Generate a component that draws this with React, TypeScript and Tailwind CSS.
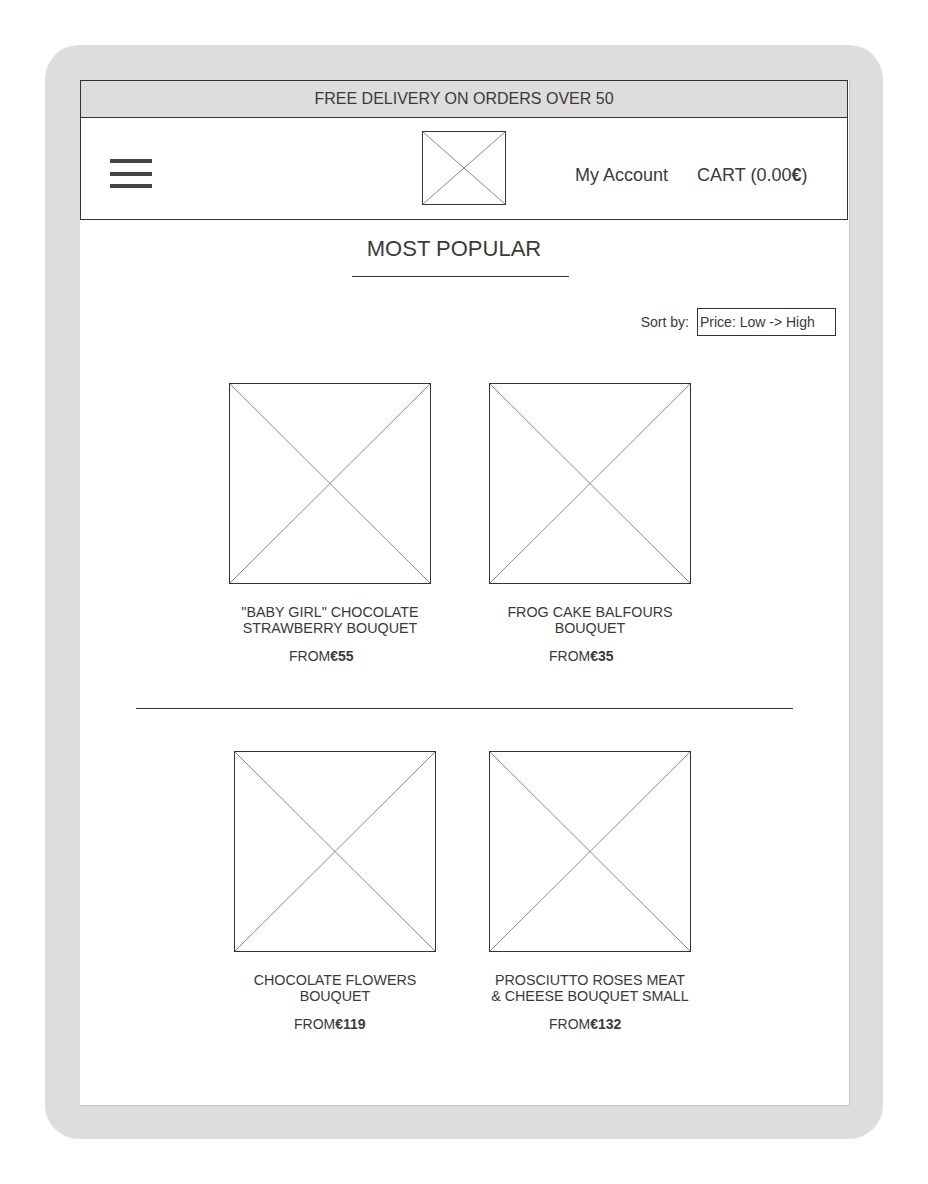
import React from 'react'

interface Product {
  lines: string[]
  price: string
}

const rowOne: Product[] = [
  { lines: ['"BABY GIRL" CHOCOLATE', 'STRAWBERRY BOUQUET'], price: '€55' },
  { lines: ['FROG CAKE BALFOURS', 'BOUQUET'], price: '€35' },
]

const rowTwo: Product[] = [
  { lines: ['CHOCOLATE FLOWERS', 'BOUQUET'], price: '€119' },
  { lines: ['PROSCIUTTO ROSES MEAT', '& CHEESE BOUQUET SMALL'], price: '€132' },
]

// wireframe image placeholder: box with a cross
function Placeholder({ className }: { className: string }) {
  return (
    <div className={`relative border border-[#333333] bg-white ${className}`}>
      <svg className="absolute inset-0 h-full w-full" viewBox="0 0 100 100" preserveAspectRatio="none">
        <line x1="0" y1="0" x2="100" y2="100" stroke="#8a8a8a" strokeWidth="1" vectorEffect="non-scaling-stroke" />
        <line x1="100" y1="0" x2="0" y2="100" stroke="#8a8a8a" strokeWidth="1" vectorEffect="non-scaling-stroke" />
      </svg>
    </div>
  )
}

function ProductCard({ product }: { product: Product }) {
  return (
    <div className="flex w-[202px] flex-col">
      <Placeholder className="h-[201px] w-[202px]" />
      <p className="mt-[20px] whitespace-nowrap text-center text-[14.3px] leading-[16px] text-[#3a3a3a]">
        {product.lines[0]}
        <br />
        {product.lines[1]}
      </p>
      {/* price sits in a fixed text box, so it starts at the same offset */}
      <p className="mt-[12px] pl-[60px] text-[14px] leading-[16px] text-[#3a3a3a]">
        FROM<span className="font-bold">{product.price}</span>
      </p>
    </div>
  )
}

export default function App() {
  return (
    <div className="min-h-[1184px] w-[928px] bg-white pl-[45px] pt-[45px] font-['Liberation_Sans',Arial,sans-serif]">
      <div className="h-[1094px] w-[838px] rounded-[34px] bg-[#dddddd] pl-[35px] pt-[35px]">
        <div className="h-[1025px] w-[769px] bg-white shadow-[1px_1px_0_#c4c4c4]">
          {/* top promo bar */}
          <div className="flex h-[38px] w-[768px] items-center justify-center border border-[#333333] bg-[#dddddd] text-[16px] text-[#3a3a3a]">
            FREE DELIVERY ON ORDERS OVER 50
          </div>

          {/* header */}
          <div className="flex h-[102px] w-[768px] items-start border-x border-b border-[#333333]">
            <div className="ml-[29px] mt-[41px] flex w-[42px] flex-col gap-[8.5px]">
              <span className="h-[4px] w-full bg-[#444444]" />
              <span className="h-[4px] w-full bg-[#444444]" />
              <span className="h-[4px] w-full bg-[#444444]" />
            </div>
            <Placeholder className="ml-[270px] mt-[13px] h-[74px] w-[84px]" />
            <div className="ml-[69px] mt-[46px] flex items-center gap-[29px] text-[18px] leading-[22px] text-[#3a3a3a]">
              <span>My Account</span>
              <span>
                CART (0.00<span className="font-bold">€</span>)
              </span>
            </div>
          </div>

          {/* title */}
          <div className="ml-[272px] mt-[16px] flex w-[217px] flex-col items-center">
            <h1 className="pr-[13px] text-[22px] leading-[26px] text-[#3a3a3a]">MOST POPULAR</h1>
            <div className="mt-[14px] h-[1px] w-full bg-[#333333]" />
          </div>

          {/* sort */}
          <div className="mr-[13px] mt-[31px] flex items-center justify-end gap-[8px] text-[14px] text-[#3a3a3a]">
            <span>Sort by:</span>
            <div className="flex h-[28px] w-[139px] items-center border border-[#333333] pl-[2px]">
              Price: Low -&gt; High
            </div>
          </div>

          {/* row one */}
          <div className="ml-[149px] mt-[47px] flex gap-[58px]">
            {rowOne.map((p) => (
              <ProductCard key={p.lines.join()} product={p} />
            ))}
          </div>

          <div className="ml-[56px] mt-[44px] h-[1px] w-[657px] bg-[#333333]" />

          {/* row two */}
          <div className="ml-[154px] mt-[42px] flex gap-[53px]">
            {rowTwo.map((p) => (
              <ProductCard key={p.lines.join()} product={p} />
            ))}
          </div>
        </div>
      </div>
    </div>
  )
}
